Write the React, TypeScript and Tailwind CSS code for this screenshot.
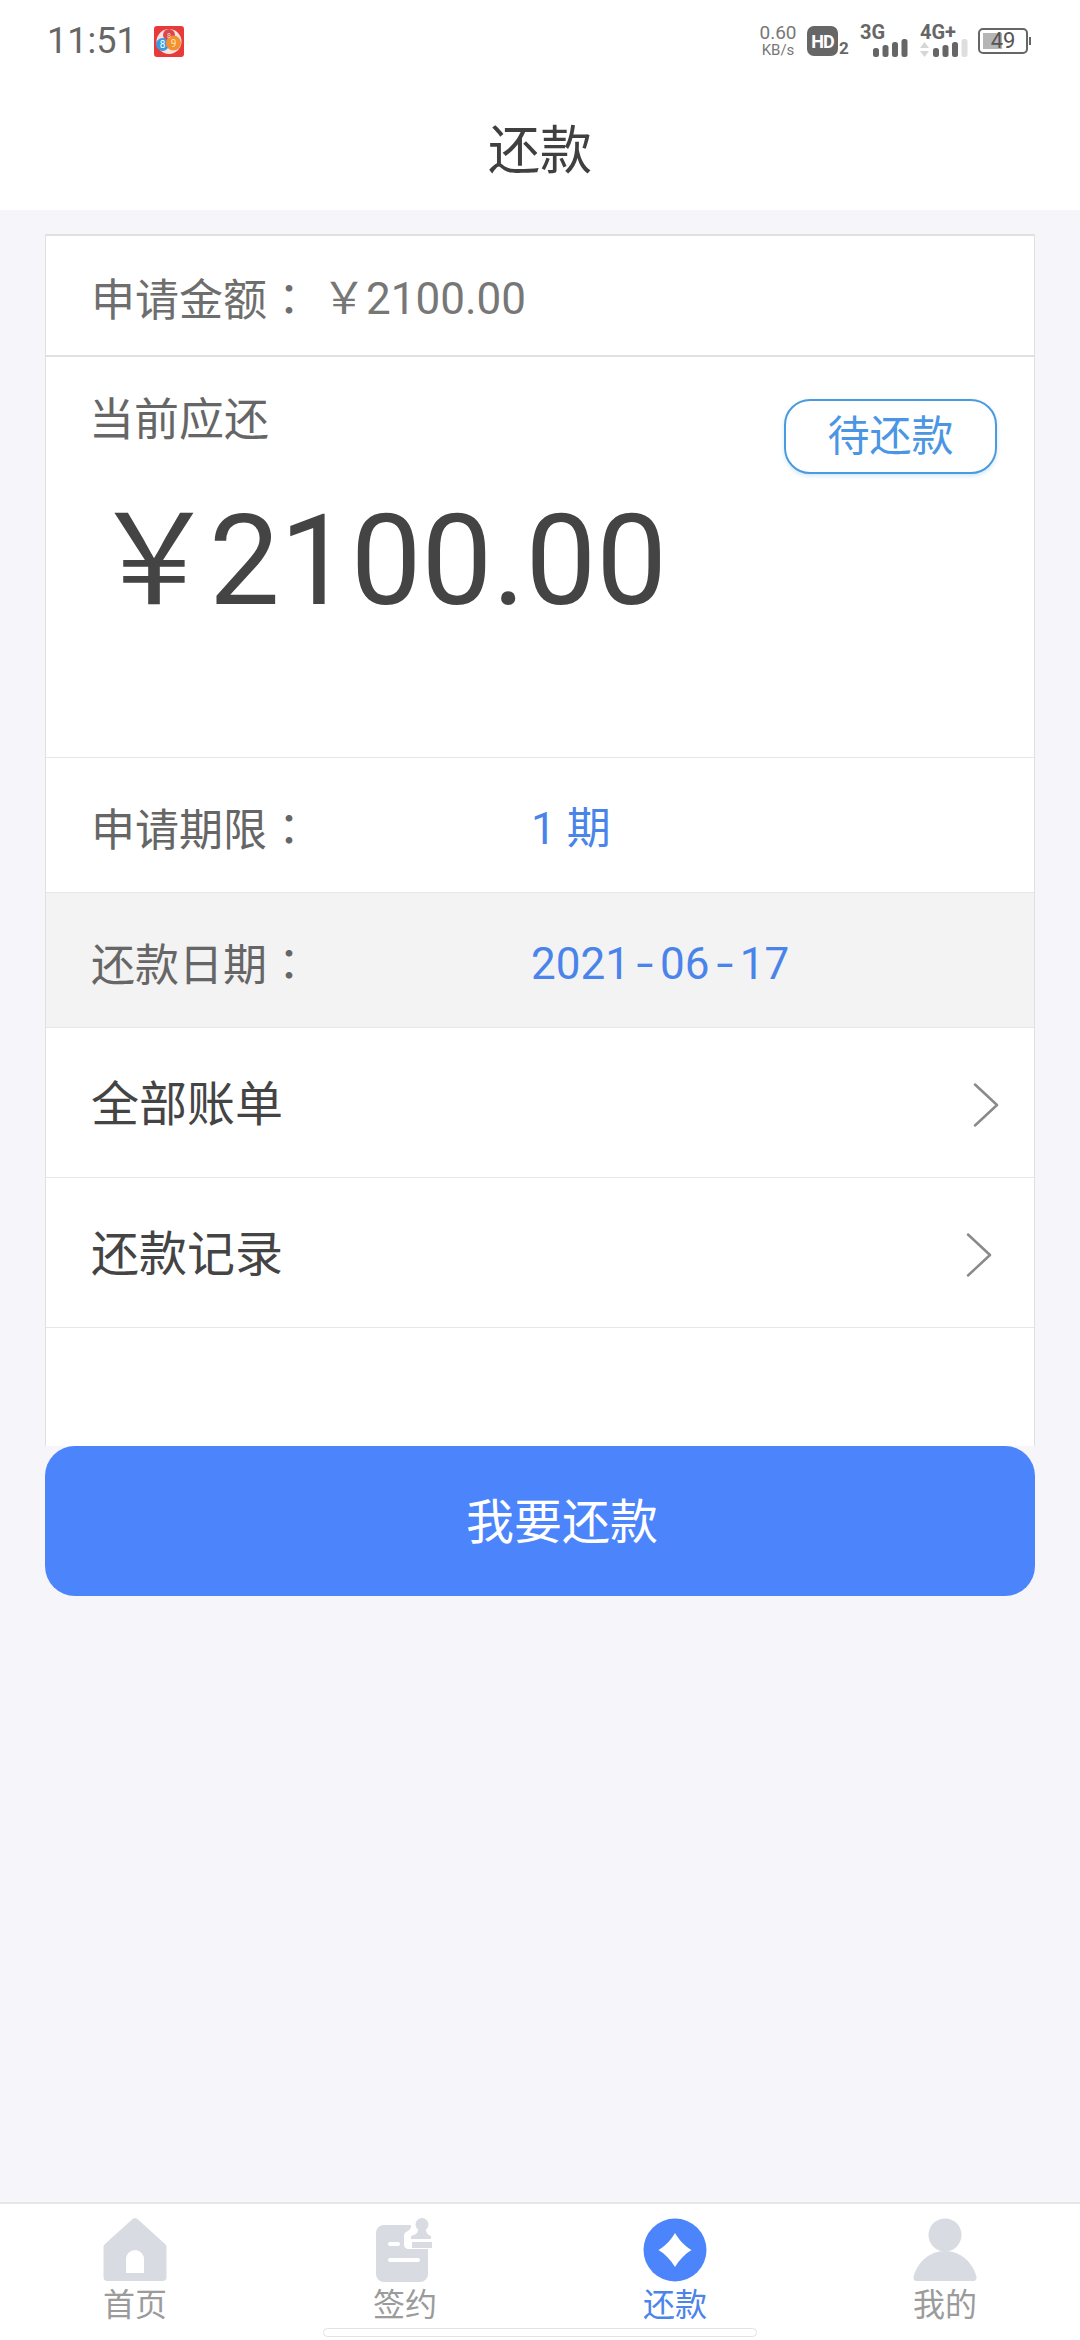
const FONT = "font-['Roboto','Noto_Sans_CJK_SC',sans-serif]"

const SignalBars = ({ last = '#666' }: { last?: string }) => (
    <svg width="35" height="18" viewBox="0 0 35 18">
        <rect x="0" y="9" width="6" height="9" rx="2.5" fill="#666" />
        <rect x="9.500" y="6" width="6" height="12" rx="2.5" fill="#666" />
        <rect x="19" y="3" width="6" height="15" rx="2.5" fill="#666" />
        <rect x="28.500" y="0" width="6" height="18" rx="2.5" fill={last} />
    </svg>
)

const AppBadge = () => (
    <svg width="30" height="31" viewBox="0 0 30 31">
        <rect width="30" height="31" rx="3" fill="#e93a3a" />
        <circle cx="15" cy="15.500" r="12.500" fill="#f7e4e0" />
        <circle cx="15" cy="9" r="6" fill="#d8484c" />
        <circle cx="8.500" cy="18.500" r="6.500" fill="#3b9be0" />
        <circle cx="19.500" cy="17" r="7.500" fill="#f4912f" />
        <text x="15" y="11.500" fontSize="7" textAnchor="middle" fill="#fbd9d9">8</text>
        <text x="8.500" y="22" fontSize="10" textAnchor="middle" fill="#fff">8</text>
        <text x="19.500" y="20.500" fontSize="10" textAnchor="middle" fill="#fde4b8">9</text>
    </svg>
)

const StatusBar = () => (
    <div className="flex h-[80px] items-center justify-between pl-[47px] pr-[49px] pt-[2px]">
        <div className="flex items-center gap-[17px]">
            <span className="text-[36px] leading-none text-[#666]">11:51</span>
            <AppBadge />
        </div>
        <div className="flex items-center">
            <div className="flex w-[40px] flex-col items-center text-[#777]">
                <span className="text-[19px] leading-[18px]">0.60</span>
                <span className="text-[15px] leading-[16px]">KB/s</span>
            </div>
            <div className="ml-[9px] flex h-[30px] w-[31px] items-center justify-center rounded-[7px] bg-[#666] text-[18px] font-bold tracking-[-1px] text-white">
                HD
            </div>
            <span className="mt-[14px] w-[12px] pl-[1px] text-[17px] font-bold leading-none text-[#666]">2</span>
            <div className="ml-[10px] flex w-[48px] flex-col">
                <span className="text-[20px] font-bold leading-[14px] text-[#666]">3G</span>
                <div className="ml-[13px] flex">
                    <SignalBars />
                </div>
            </div>
            <div className="ml-[12px] flex w-[48px] flex-col">
                <span className="text-[20px] font-bold leading-[14px] text-[#666]">4G+</span>
                <div className="flex items-end gap-[4px]">
                    <svg width="9" height="15" viewBox="0 0 9 15">
                        <path d="M4.500 0 9 6H0zM0 9h9l-4.500 6z" fill="#d6d6d6" />
                    </svg>
                    <SignalBars last="#dedede" />
                </div>
            </div>
            <div className="ml-[10px] flex items-center">
                <div className="relative flex h-[26px] w-[50px] items-center justify-center rounded-[5px] border-2 border-[#666] text-[22px] leading-none text-[#555]">
                    <div className="absolute bottom-[3px] left-[3px] top-[3px] w-[19px] bg-[#b5b5b5]" />
                    <span className="relative">49</span>
                </div>
                <div className="ml-[1px] h-[8px] w-[2px] bg-[#666]" />
            </div>
        </div>
    </div>
)

// the reference centres the full-width colon in its cell, which is the TC form
const Colon = () => <span className="font-['Noto_Sans_CJK_TC',sans-serif]">：</span>

const Hyphen = () => <span className="mx-[9px] inline-block scale-x-[1.4]">-</span>

const InfoRow = ({ label, children, shaded }: { label: string; children: React.ReactNode; shaded?: boolean }) => (
    <div className={`flex h-[135px] items-center border-b border-[#e6e6e6] pl-[45px] pt-[8px] ${shaded ? 'bg-[#f3f3f3]' : ''}`}>
        <span className="w-[440px] text-[44px] text-[#666]">
            {label}
            <Colon />
        </span>
        <span className="text-[44px] text-[#4a84ea]">{children}</span>
    </div>
)

const LinkRow = ({ label, pr }: { label: string; pr: string }) => (
    <div className={`flex h-[150px] items-center justify-between border-b border-[#e6e6e6] pl-[45px] pt-[4px] ${pr}`}>
        <span className="text-[48px] text-[#444]">{label}</span>
        <svg width="26" height="44" viewBox="0 0 26 44" fill="none">
            <path d="M2 1.500 24 22 2 42.500" stroke="#8a8a8a" strokeWidth="2.500" strokeLinecap="round" strokeLinejoin="round" />
        </svg>
    </div>
)

const HomeIcon = () => (
    <svg width="64" height="64" viewBox="0 0 64 64">
        <path
            fillRule="evenodd"
            d="M29 1.500a4 4 0 0 1 6 0L62 26a4 4 0 0 1 1.500 3v30a4 4 0 0 1-4 4h-55a4 4 0 0 1-4-4V29a4 4 0 0 1 1.500-3zM23 55h18V41a9 9 0 0 0-18 0z"
            fill="#d9dbe2"
        />
    </svg>
)

const SignIcon = () => (
    <svg width="58" height="64" viewBox="0 0 58 64">
        <path
            d="M8 7h26c1 0 1.500 1 1 2-1 3-3 4-5 5-2 1-2 3-2 5v8c0 2 2 4 4 4h20v25a8 8 0 0 1-8 8H8a8 8 0 0 1-8-8V15a8 8 0 0 1 8-8z"
            fill="#d9dbe2"
        />
        <circle cx="46" cy="6.500" r="6.500" fill="#d9dbe2" />
        <path d="M42 12h8c0 3 2 5 5 6v3H35v-3c4-1 7-3 7-6z" fill="#d9dbe2" />
        <rect x="36" y="24" width="20" height="6" fill="#d9dbe2" />
        <rect x="12" y="24" width="12" height="4" rx="2" fill="#fff" />
        <rect x="12" y="40" width="32" height="4" rx="2" fill="#fff" />
    </svg>
)

const RepayIcon = () => (
    <svg width="64" height="64" viewBox="0 0 64 64">
        <circle cx="32" cy="32" r="31.500" fill="#4c84fb" />
        <path d="M32 15c4 7 10 13 16.500 17C42 36 36 42 32 49c-4-7-10-13-16.500-17C22 28 28 22 32 15z" fill="#fff" />
    </svg>
)

const MeIcon = () => (
    <svg width="64" height="64" viewBox="0 0 64 64">
        <circle cx="32" cy="17" r="16.500" fill="#d9dbe2" />
        <path d="M32 33c16 0 28 12 31.500 26 .5 2-1 4-3 4h-57c-2 0-3.500-2-3-4C4 45 16 33 32 33z" fill="#d9dbe2" />
    </svg>
)

const tabs = [
    { label: '首页', icon: <HomeIcon /> },
    { label: '签约', icon: <SignIcon /> },
    { label: '还款', icon: <RepayIcon />, active: true },
    { label: '我的', icon: <MeIcon /> },
]

const TabBar = () => (
    <div className="grid h-[138px] grid-cols-4 border-t-2 border-[#e6e6e8] bg-white pt-[14px]">
        {tabs.map((tab) => (
            <div key={tab.label} className="flex flex-col items-center">
                {tab.icon}
                <span className={`mt-[3px] text-[32px] leading-[40px] ${tab.active ? 'text-[#4c84ea]' : 'text-[#9b9b9b]'}`}>
                    {tab.label}
                </span>
            </div>
        ))}
    </div>
)

export default function App() {
    return (
        <div className={`${FONT} relative flex h-[2340px] w-[1080px] flex-col overflow-hidden bg-[#f5f5fa]`}>
            <div className="h-[210px] bg-white">
                <StatusBar />
                <div className="flex h-[130px] items-center justify-center pt-[14px] text-[52px] text-[#404040]">还款</div>
            </div>
            <main className="flex-1 px-[45px] pt-[24px]">
                <div className="h-[1212px] border-x border-t-2 border-[#e0e0e0] bg-white">
                    <div className="flex h-[121px] items-center border-b-2 border-[#e0e0e0] pl-[45px] pt-[6px] text-[44px] text-[#777]">
                        <span className="text-[#6e6e6e]">
                            申请金额
                            <Colon />
                        </span>
                        <span className="ml-[11px]">￥2100.00</span>
                    </div>
                    <div className="flex h-[401px] items-start justify-between border-b border-[#e6e6e6] pl-[44px] pr-[37px]">
                        <div>
                            <div className="ml-[-1px] mt-[36px] text-[45px] leading-[56px] text-[#666]">当前应还</div>
                            <div className="ml-[1px] mt-[42px] text-[126px] leading-[140px] text-[#444]">
                                <span className="mr-[-8px]">￥</span>
                                2100.00
                            </div>
                        </div>
                        <div className="mt-[42px] flex h-[75px] w-[213px] items-center justify-center rounded-[26px] border-2 border-[#4a9ae0] text-[42px] text-[#4a96e4] shadow-[0_2px_4px_rgba(74,154,224,0.25)]">
                            待还款
                        </div>
                    </div>
                    <InfoRow label="申请期限">1 期</InfoRow>
                    <InfoRow label="还款日期" shaded>
                        2021
                        <Hyphen />
                        06
                        <Hyphen />
                        17
                    </InfoRow>
                    <LinkRow label="全部账单" pr="pr-[35px]" />
                    <LinkRow label="还款记录" pr="pr-[42px]" />
                </div>
                <button className="flex h-[150px] w-full items-center justify-center rounded-[30px] bg-[#4c84fb] pl-[44px] pt-[4px] text-[48px] text-white">
                    我要还款
                </button>
            </main>
            <TabBar />
            <div className="absolute bottom-[3px] left-[323px] h-[9px] w-[434px] rounded-full border border-[#e2e2e2] bg-white" />
        </div>
    )
}
